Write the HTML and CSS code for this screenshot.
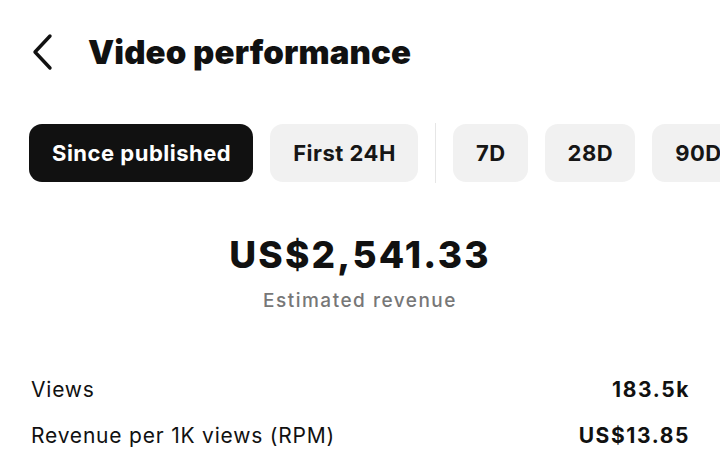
FILE: index.html
```html
<!DOCTYPE html>
<html lang="en">
<head>
    <meta charset="UTF-8">
    <meta name="viewport" content="width=device-width, initial-scale=1.0">
    <title>Video performance</title>
    <link rel="stylesheet" href="styles.css">
</head>
<body>

<div class="header">
    <svg class="back" width="24" height="38" viewBox="0 0 24 38">
        <path d="M19 3 L4 19 L19 35" fill="none" stroke="#111" stroke-width="3.4" stroke-linecap="round" stroke-linejoin="round"/>
    </svg>
    <h1 class="title">Video performance</h1>
</div>

<div class="tabs">
    <button class="tab active">Since published</button>
    <button class="tab">First 24H</button>
    <span class="divider"></span>
    <button class="tab">7D</button>
    <button class="tab">28D</button>
    <button class="tab">90D</button>
</div>

<div class="summary">
    <div class="amount">US$2,541.33</div>
    <div class="caption">Estimated revenue</div>
</div>

<div class="stats">
    <div class="row">
        <span class="label">Views</span>
        <span class="value">183.5k</span>
    </div>
    <div class="row">
        <span class="label">Revenue per 1K views (RPM)</span>
        <span class="value">US$13.85</span>
    </div>
</div>

</body>
</html>
```

FILE: styles.css
```css
body {
    margin: 0;
    background-color: #fff;
    color: #111;
    font-family: 'Inter', 'Noto Sans', sans-serif;
    -webkit-font-smoothing: antialiased;
    overflow: hidden;
}
.header {
    display: flex;
    align-items: center;
    height: 64px;
    margin-top: 20px;
    padding-left: 31px;
    gap: 33px;
}
.title {
    margin: 0;
    font-size: 33px;
    font-weight: 900;
    letter-spacing: 0.1px;
}
.tabs {
    display: flex;
    align-items: center;
    gap: 17px;
    margin-top: 39px;
    padding-left: 29px;
    white-space: nowrap;
}
.tab {
    flex-shrink: 0;
    height: 58px;
    padding: 0 22px 0 23px;
    border: none;
    border-radius: 13px;
    background-color: #f1f1f1;
    color: #161616;
    font-family: inherit;
    font-size: 22px;
    font-weight: 700;
    letter-spacing: 0.5px;
}
.tab.active {
    background-color: #111;
    color: #fff;
}
.divider {
    flex-shrink: 0;
    width: 1px;
    height: 60px;
    background-color: #e6e6e6;
}
.summary {
    display: flex;
    flex-direction: column;
    align-items: center;
    margin-top: 50px;
}
.amount {
    font-size: 37px;
    font-weight: 800;
    line-height: 44px;
    letter-spacing: 2.2px;
}
.caption {
    margin-top: 12px;
    font-size: 19px;
    font-weight: 500;
    line-height: 24px;
    letter-spacing: 1.5px;
    color: #777;
}
.stats {
    margin-top: 64px;
    padding: 0 30px 0 31px;
}
.row {
    display: flex;
    justify-content: space-between;
    align-items: baseline;
    height: 46px;
    font-size: 21px;
    line-height: 26px;
    letter-spacing: 0.8px;
}
.value {
    font-weight: 700;
    letter-spacing: 1.6px;
}
```
